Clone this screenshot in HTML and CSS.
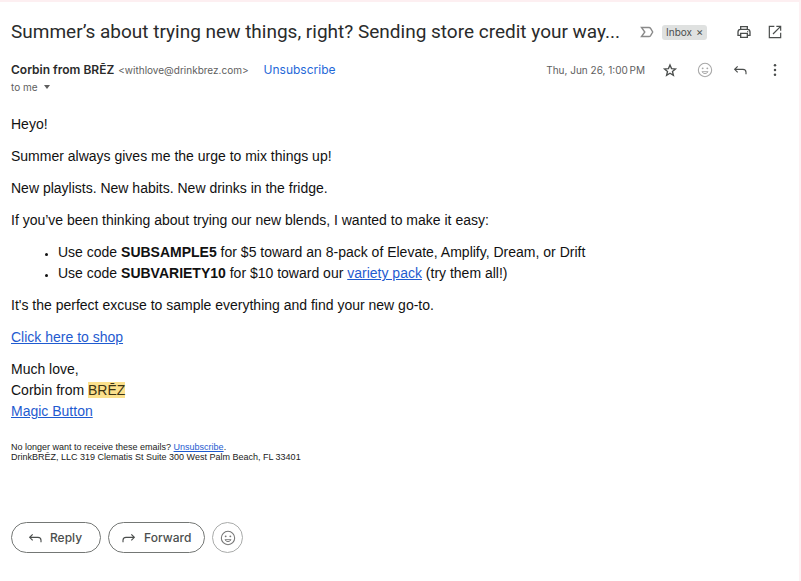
FILE: index.html
```html
<!DOCTYPE html>
<html lang="en">
<head>
    <meta charset="UTF-8">
    <meta name="viewport" content="width=device-width, initial-scale=1.0">
    <title>Summer’s about trying new things, right?</title>
    <link rel="stylesheet" href="styles.css">
</head>
<body>
    <svg class="sprite" aria-hidden="true">
        <symbol id="icon-reply" viewBox="0 0 24 24">
            <path d="M8.500 6.500L4 11l4.500 4.500M4 11h12.500q4.500 0 4.500 4.500V18.500" fill="none" stroke="currentColor" stroke-width="1.700"/>
        </symbol>
        <symbol id="icon-smile" viewBox="0 0 24 24">
            <circle cx="12" cy="12" r="10" fill="none" stroke="currentColor" stroke-width="1.600"/>
            <circle cx="8.500" cy="9.500" r="1.400" fill="currentColor"/>
            <circle cx="15.500" cy="9.500" r="1.400" fill="currentColor"/>
            <path d="M7.500 14.500h9q-1.500 3-4.500 3t-4.500-3z" fill="none" stroke="currentColor" stroke-width="1.400"/>
        </symbol>
    </svg>

    <main class="message">
        <header class="subject-row">
            <h1 class="subject">Summer’s about trying new things, right? Sending store credit your way...</h1>
            <svg class="important" viewBox="0 0 14 12" aria-hidden="true">
                <path d="M1.500 1.500h7.500q1 0 1.600.9L12.700 6l-2.100 3.600q-.6.9-1.600.9H1.500L4.800 6z" fill="none" stroke="currentColor" stroke-width="1.400"/>
            </svg>
            <span class="label">Inbox <button type="button" class="label-remove" aria-label="Remove label">×</button></span>
            <div class="subject-actions">
                <button type="button" class="icon-btn" aria-label="Print all">
                    <svg viewBox="0 0 24 24"><path d="M7 8V4h10v4M6.500 17H3v-5q0-4 4-4h10q4 0 4 4v5h-3.500M7 14h10v6H7z" fill="none" stroke="currentColor" stroke-width="2"/><circle cx="17.500" cy="11.500" r="1" fill="currentColor"/></svg>
                </button>
                <button type="button" class="icon-btn" aria-label="Open in new window">
                    <svg viewBox="0 0 24 24"><path d="M11 3.500H3.500v17h17V13M14 3.500h6.500V10M20.500 3.500L9 15" fill="none" stroke="currentColor" stroke-width="1.800"/></svg>
                </button>
            </div>
        </header>

        <div class="sender-row">
            <div class="sender">
                <div class="sender-line">
                    <span class="sender-name">Corbin from BRĒZ</span>
                    <span class="sender-email">&lt;withlove@drinkbrez.com&gt;</span>
                    <a href="#" class="unsubscribe">Unsubscribe</a>
                </div>
                <button type="button" class="recipient">to me <span class="caret"></span></button>
            </div>
            <time class="date" datetime="2025-06-26T13:00">Thu, Jun 26, 1:00&#8239;PM</time>
            <div class="sender-actions">
                <button type="button" class="icon-btn" aria-label="Star">
                    <svg viewBox="0 0 24 24"><path d="M12 4.500l2.300 5.400 5.900.5-4.500 3.900 1.400 5.700-5.100-3.100L6.900 20l1.400-5.700-4.500-3.900 5.900-.5z" fill="none" stroke="currentColor" stroke-width="2"/></svg>
                </button>
                <button type="button" class="icon-btn muted" aria-label="Add reaction">
                    <svg><use href="#icon-smile"/></svg>
                </button>
                <button type="button" class="icon-btn" aria-label="Reply">
                    <svg><use href="#icon-reply"/></svg>
                </button>
                <button type="button" class="icon-btn" aria-label="More">
                    <svg viewBox="0 0 24 24" fill="currentColor"><circle cx="12" cy="5" r="1.900"/><circle cx="12" cy="12" r="1.900"/><circle cx="12" cy="19" r="1.900"/></svg>
                </button>
            </div>
        </div>

        <article class="mail-body">
            <p>Heyo!</p>
            <p>Summer always gives me the urge to mix things up!</p>
            <p>New playlists. New habits. New drinks in the fridge.</p>
            <p>If you’ve been thinking about trying our new blends, I wanted to make it easy:</p>
            <ul>
                <li>Use code <strong>SUBSAMPLE5</strong> for $5 toward an 8-pack of Elevate, Amplify, Dream, or Drift</li>
                <li>Use code <strong>SUBVARIETY10</strong> for $10 toward our <a href="#">variety pack</a> (try them all!)</li>
            </ul>
            <p>It's the perfect excuse to sample everything and find your new go-to.</p>
            <p><a href="#">Click here to shop</a></p>
            <p>Much love,<br>Corbin from <mark>BRĒZ</mark><br><a href="#">Magic Button</a></p>
        </article>

        <footer class="mail-footer">
            No longer want to receive these emails? <a href="#">Unsubscribe</a>.<br>
            DrinkBRĒZ, LLC 319 Clematis St Suite 300 West Palm Beach, FL 33401
        </footer>

        <div class="reply-bar">
            <button type="button" class="pill reply"><svg><use href="#icon-reply"/></svg>Reply</button>
            <button type="button" class="pill"><svg class="flip"><use href="#icon-reply"/></svg>Forward</button>
            <button type="button" class="pill round" aria-label="Add reaction"><svg><use href="#icon-smile"/></svg></button>
        </div>
    </main>
</body>
</html>
```
FILE: styles.css
```css
:root {
    --text: #2a2b2b;
    --muted: #5e5e5e;
    --icon: #4b4e4d;
    --link: #1f5bd0;
    --ui-font: Inter, Roboto, sans-serif;
}

* {
    box-sizing: border-box;
}

body {
    margin: 0;
    min-height: 100vh;
    border-top: 2px solid #fdeff1;
    border-right: 2px solid #fdf1f3;
    background: #fff;
    color: var(--text);
    font-family: var(--ui-font);
}

button {
    padding: 0;
    border: 0;
    background: none;
    color: inherit;
    font: inherit;
    cursor: pointer;
}

.sprite {
    display: none;
}

.message {
    padding: 16px 16px 28px 11px;
}

.subject-row {
    display: flex;
    align-items: center;
    height: 28px;
}

.subject {
    margin: 0;
    font-family: Roboto, sans-serif;
    font-size: 19px;
    font-weight: 400;
    line-height: 28px;
    white-space: nowrap;
}

.important {
    flex: none;
    width: 14px;
    height: 12px;
    margin: 0 8px 0 20px;
    color: #8a8a8a;
}

.label {
    display: flex;
    align-items: center;
    gap: 4px;
    height: 15px;
    padding: 0 4px;
    border-radius: 3px;
    background: #dfe1e0;
    color: var(--icon);
    font-size: 10px;
}

.label-remove {
    font-size: 11px;
    line-height: 12px;
}

.subject-actions {
    display: flex;
    gap: 15px;
    margin-left: auto;
}

.icon-btn {
    display: flex;
    color: var(--icon);
}

.icon-btn svg {
    width: 16px;
    height: 16px;
}

.icon-btn.muted {
    color: #a8a8a8;
}

.sender-row {
    display: flex;
    align-items: flex-start;
    margin-top: 15px;
}

.sender-line {
    display: flex;
    align-items: baseline;
    line-height: 18px;
}

.sender-name {
    font-size: 12px;
    font-weight: 600;
}

.sender-email {
    margin-left: 4px;
    color: var(--muted);
    font-size: 10px;
}

.unsubscribe {
    margin-left: 15px;
    color: #1f68d8;
    font-size: 12px;
    text-decoration: none;
}

.recipient {
    display: flex;
    align-items: center;
    gap: 6px;
    color: var(--muted);
    font-size: 10px;
    line-height: 16px;
}

.caret {
    border: 3px solid transparent;
    border-top: 4px solid var(--muted);
    border-bottom: 0;
}

.date {
    margin-left: auto;
    color: var(--muted);
    font-size: 10px;
    line-height: 18px;
}

.sender-actions {
    display: flex;
    gap: 19px;
    margin: 1px 0 0 17px;
}

.mail-body {
    margin-top: 19px;
    color: #111;
    font-family: "Liberation Sans", Arial, sans-serif;
    font-size: 14px;
    line-height: 21px;
}

.mail-body p,
.mail-body ul {
    margin: 0 0 11px;
}

.mail-body ul {
    padding-left: 47px;
}

.mail-body li::marker {
    font-size: 11px;
}

.mail-body a,
.mail-footer a {
    color: var(--link);
}

.mail-body mark {
    background: #fbe08c;
    color: #3c3314;
}

.mail-footer {
    margin-top: 20px;
    color: #222;
    font-family: "Liberation Sans", Arial, sans-serif;
    font-size: 9px;
    line-height: 10px;
}

.reply-bar {
    display: flex;
    gap: 7px;
    margin-top: 60px;
}

.pill {
    display: flex;
    align-items: center;
    gap: 7px;
    height: 31px;
    padding: 0 13px 0 12px;
    border: 1px solid #747775;
    border-radius: 16px;
    color: var(--icon);
    font-size: 12px;
    font-weight: 500;
}

.pill.reply {
    padding: 0 18px 0 15px;
}

.pill svg {
    width: 16px;
    height: 16px;
}

.pill .flip {
    transform: scaleX(-1);
}

.pill.round {
    justify-content: center;
    width: 31px;
    padding: 0;
    border-color: #a9abaa;
    color: #777;
}
```
